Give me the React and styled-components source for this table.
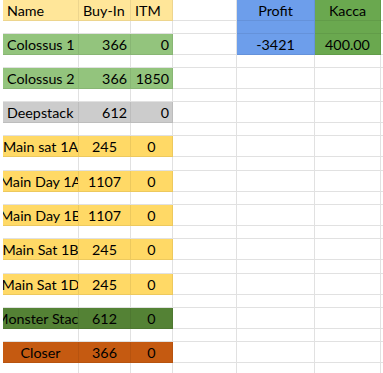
import React from 'react'
import styled, { createGlobalStyle } from 'styled-components'

const GlobalStyle = createGlobalStyle`
    body {
        margin: 0;
        background: #fff;
        font-family: Lato, "Liberation Sans", Arial, sans-serif;
    }
`;

const COLS = [76, 52, 42, 64, 78, 66, 20];

// STYLES
const Sheet = styled.div`
    display: flex;
    flex-direction: column;
    padding-left: 3px;
    width: 383px;
    height: 373px;
    overflow: hidden;
    box-sizing: border-box;
`;

const Row = styled.div`
    display: flex;
    height: ${p => p.$h}px;
    flex-shrink: 0;
`;

const Cell = styled.div`
    box-sizing: border-box;
    width: ${p => p.$w}px;
    flex-shrink: 0;
    display: flex;
    align-items: center;
    justify-content: ${p => p.$align === 'right' ? 'flex-end' : p.$align === 'center' ? 'center' : 'flex-start'};
    padding: ${p => p.$align === 'center' ? '1px 0 0' : '1px 3px 0 4px'};
    overflow: hidden;
    white-space: nowrap;
    background: ${p => p.$fill || '#fff'};
    border-right: 1px solid ${p => p.$fill ? 'rgba(0, 0, 0, 0.07)' : '#e1e1e1'};
    border-bottom: 1px solid ${p => p.$fill ? 'rgba(0, 0, 0, 0.07)' : '#e1e1e1'};
    color: #000;
    font-size: 14.3px;
`;

const Text = styled.span`
    flex-shrink: 0;
`;

const HEAD_Y = '#ffe699';
const BLUE = '#6d9eeb';
const KASSA = '#6aa84f';

const rows = [
    { name: 'Colossus 1', buy: '366', itm: '0', fill: '#93c47d', align: 'right' },
    { name: 'Colossus 2', buy: '366', itm: '1850', fill: '#93c47d', align: 'right' },
    { name: 'Deepstack', buy: '612', itm: '0', fill: '#cccccc', align: 'right' },
    { name: 'Main sat 1A', buy: '245', itm: '0', fill: '#ffd966', align: 'center' },
    { name: 'Main Day 1A', buy: '1107', itm: '0', fill: '#ffd966', align: 'center' },
    { name: 'Main Day 1B', buy: '1107', itm: '0', fill: '#ffd966', align: 'center' },
    { name: 'Main Sat 1B', buy: '245', itm: '0', fill: '#ffd966', align: 'center' },
    { name: 'Main Sat 1D', buy: '245', itm: '0', fill: '#ffd966', align: 'center' },
    { name: 'Monster Stack', buy: '612', itm: '0', fill: '#548235', align: 'center' },
    { name: 'Closer', buy: '366', itm: '0', fill: '#c55a11', align: 'center' },
];

const blank = (extra = {}) => COLS.map((w, i) => ({ w, fill: extra[i] }));

// MARKUP
const SheetRow = ({ h, cells }) => (
    <Row $h={h}>
        {cells.map((c, i) => (
            <Cell key={i} $w={c.w} $fill={c.fill} $align={c.align}>
                {c.text !== undefined && <Text>{c.text}</Text>}
            </Cell>
        ))}
    </Row>
);

const App = () => {
    const lines = [];

    lines.push({
        h: 21,
        cells: [
            { w: COLS[0], fill: HEAD_Y, text: 'Name' },
            { w: COLS[1], fill: HEAD_Y, text: 'Buy-In' },
            { w: COLS[2], fill: HEAD_Y, text: 'ITM' },
            { w: COLS[3] },
            { w: COLS[4], fill: BLUE, text: 'Profit', align: 'center' },
            { w: COLS[5], fill: KASSA, text: 'Kacca', align: 'center' },
            { w: COLS[6] },
        ],
    });

    rows.forEach((r, idx) => {
        lines.push({ h: idx === 4 || idx === 7 ? 14 : 13, cells: blank(idx === 0 ? { 4: BLUE, 5: KASSA } : {}) });
        const cells = [
            { w: COLS[0], fill: r.fill, text: r.name, align: r.align === 'right' ? 'left' : 'center' },
            { w: COLS[1], fill: r.fill, text: r.buy, align: r.align },
            { w: COLS[2], fill: r.fill, text: r.itm, align: r.align },
            { w: COLS[3] },
            idx === 0 ? { w: COLS[4], fill: BLUE, text: '-3421', align: 'center' } : { w: COLS[4] },
            idx === 0 ? { w: COLS[5], fill: KASSA, text: '400.00', align: 'center' } : { w: COLS[5] },
            { w: COLS[6] },
        ];
        lines.push({ h: 21, cells });
    });

    lines.push({ h: 13, cells: blank() });

    return (
        <>
            <GlobalStyle />
            <Sheet>
                {lines.map((l, i) => <SheetRow key={i} h={l.h} cells={l.cells} />)}
            </Sheet>
        </>
    );
};

export default App
